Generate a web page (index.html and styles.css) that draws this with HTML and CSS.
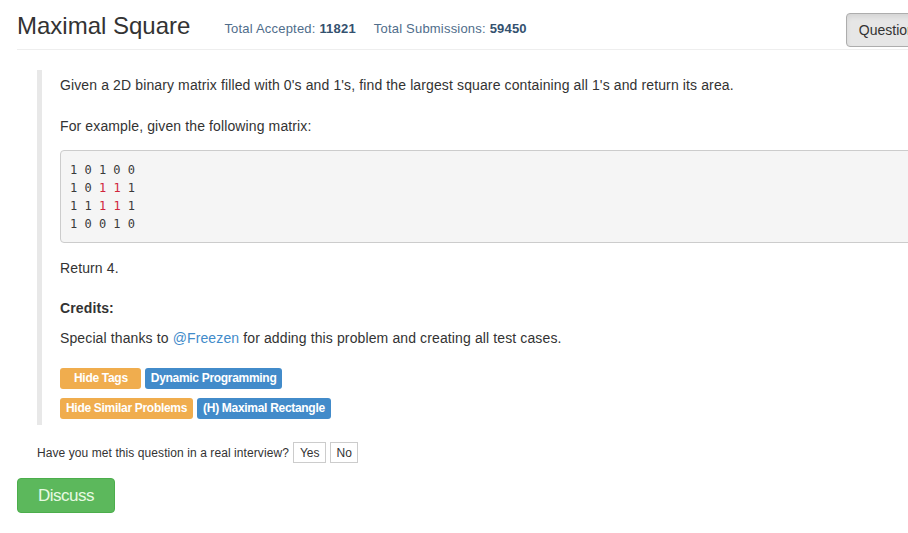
FILE: index.html
```html
<!DOCTYPE html>
<html>
<head>
<meta charset="utf-8">
<title>Maximal Square</title>
<link rel="stylesheet" href="styles.css">
</head>
<body>
<div class="page">
  <div class="header">
    <h1 class="title">Maximal Square</h1>
    <div class="stats">
      <span class="stat">Total Accepted: <b>11821</b></span>
      <span class="stat">Total Submissions: <b>59450</b></span>
    </div>
    <button class="btn-question">Questions List</button>
  </div>

  <div class="question">
    <p class="p-first">Given a 2D binary matrix filled with 0's and 1's, find the largest square containing all 1's and return its area.</p>
    <p class="p-example">For example, given the following matrix:</p>
<pre class="matrix">1 0 1 0 0
1 0 <span class="hl">1</span> <span class="hl">1</span> 1
1 1 <span class="hl">1</span> <span class="hl">1</span> 1
1 0 0 1 0</pre>
    <p class="p-return">Return 4.</p>
    <p class="p-credits"><b>Credits:</b></p>
    <p class="p-thanks">Special thanks to <a class="link" href="#">@Freezen</a> for adding this problem and creating all test cases.</p>
    <div class="tag-row">
      <span class="tag tag-orange tag-wide">Hide Tags</span>
      <span class="tag tag-blue">Dynamic Programming</span>
    </div>
    <div class="tag-row">
      <span class="tag tag-orange">Hide Similar Problems</span>
      <span class="tag tag-blue">(H) Maximal Rectangle</span>
    </div>
  </div>

  <div class="interview">
    <span class="interview-text">Have you met this question in a real interview?</span>
    <button class="small-btn">Yes</button>
    <button class="small-btn small-btn-no">No</button>
  </div>

  <button class="btn-discuss">Discuss</button>
</div>
</body>
</html>
```

FILE: styles.css
```css
html, body {
  margin: 0;
  padding: 0;
  overflow: hidden;
  background: #ffffff;
}

body {
  font-family: "Liberation Sans", Arial, sans-serif;
  font-size: 14px;
  color: #333333;
}

.page {
  width: 1100px;
  padding-left: 17px;
}

.header {
  display: flex;
  align-items: flex-start;
  height: 50px;
  padding-top: 12px;
  box-sizing: border-box;
  border-bottom: 1px solid #eeeeee;
}

.title {
  margin: 0;
  font-size: 24px;
  font-weight: normal;
  line-height: 28px;
  color: #333333;
}

.stats {
  display: flex;
  gap: 18px;
  margin-left: 34px;
  margin-top: 8px;
  font-size: 13px;
  line-height: 18px;
  letter-spacing: 0.2px;
  color: #4f6d8b;
}

.stats b {
  color: #34516f;
}

.btn-question {
  margin-left: 319px;
  margin-top: 1px;
  height: 34px;
  padding: 6px 12px;
  font-family: "Liberation Sans", Arial, sans-serif;
  font-size: 14px;
  line-height: 20px;
  color: #333333;
  background: #e6e6e6;
  border: 1px solid #adadad;
  border-radius: 4px;
  box-shadow: inset 0 3px 5px rgba(0,0,0,0.08);
  white-space: nowrap;
}

.question {
  margin: 20px 0 0 20px;
  padding: 5px 0 6px 18px;
  border-left: 5px solid #e8e8e8;
}

.question p {
  margin: 0;
  line-height: 20px;
  letter-spacing: 0.12px;
}

.p-first { margin-bottom: 21px !important; }
.p-example { margin-bottom: 14px !important; }
.p-return { margin-bottom: 20px !important; }
.p-credits { margin-bottom: 10px !important; }
.p-thanks { margin-bottom: 20px !important; }

.link {
  color: #428bca;
  text-decoration: none;
}

.matrix {
  margin: 0 0 15px 0;
  padding: 10px 9px 9px 9px;
  font-family: "DejaVu Sans Mono", "Liberation Mono", monospace;
  font-size: 12px;
  line-height: 18px;
  color: #3a3a3a;
  background: #f5f5f5;
  border: 1px solid #cccccc;
  border-radius: 4px;
}

.hl {
  color: #d0243c;
}

.tag-row {
  display: flex;
  gap: 4px;
}

.tag-row + .tag-row {
  margin-top: 9px;
}

.tag {
  display: inline-block;
  height: 21px;
  line-height: 21px;
  padding: 0 6px;
  font-size: 12px;
  font-weight: bold;
  letter-spacing: -0.3px;
  color: #ffffff;
  border-radius: 3px;
  white-space: nowrap;
}

.tag-wide {
  padding: 0 13px 0 14px;
}

.tag-orange {
  background: #f0ad4e;
}

.tag-blue {
  background: #428bca;
}

.interview {
  display: flex;
  align-items: center;
  gap: 4px;
  margin: 17px 0 0 20px;
  font-size: 12px;
}

.interview-text {
  letter-spacing: 0.08px;
}

.small-btn {
  height: 21px;
  padding: 0 6px;
  font-family: "Liberation Sans", Arial, sans-serif;
  font-size: 12px;
  color: #333333;
  background: #ffffff;
  border: 1px solid #cccccc;
  border-radius: 0;
}

.small-btn-no {
  padding: 0 5px;
}

.btn-discuss {
  display: block;
  margin-top: 15px;
  width: 98px;
  height: 35px;
  padding: 0;
  font-family: "Liberation Sans", Arial, sans-serif;
  font-size: 17px;
  letter-spacing: -0.5px;
  color: #e8fae2;
  background: #5cb85c;
  border: 1px solid #4cae4c;
  border-radius: 4px;
}
```
